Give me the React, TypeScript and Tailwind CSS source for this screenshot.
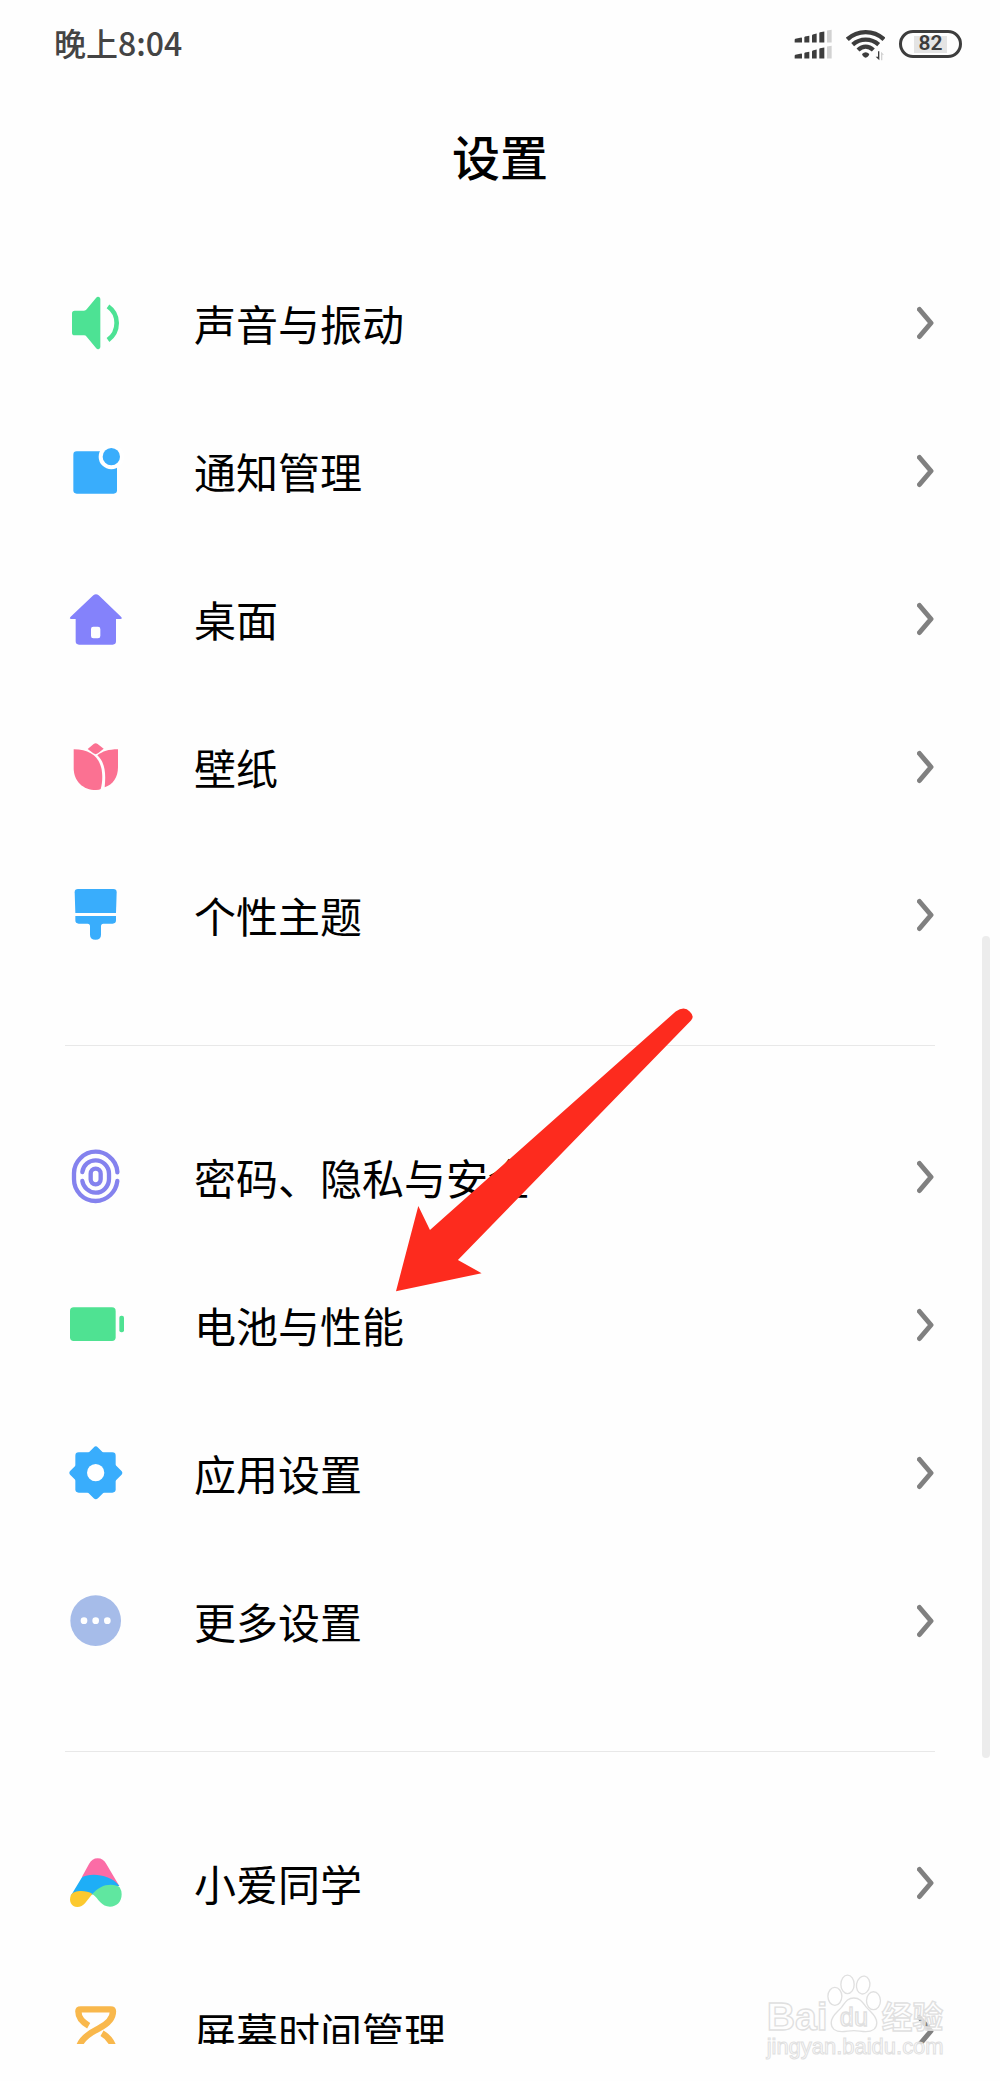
import type { ReactNode } from "react";

type SettingItem = {
  label: string;
  href: string;
  icon: ReactNode;
};

function SoundIcon() {
  return (
    <svg viewBox="75 69 180 180" className="size-[60px]" aria-hidden="true">
      <path
        d="M104 122h28q5 0 8-4l28-34q4-5 9-3q4 1 4 6v144q0 5-4 6q-5 2-9-3l-28-34q-3-4-8-4h-28q-8 0-8-8v-58q0-8 8-8z"
        fill="#4de294"
      />
      <path d="M204 109q26 18 26 50t-26 51" fill="none" stroke="#4de294" strokeWidth="14" />
    </svg>
  );
}

function NotificationIcon() {
  return (
    <svg viewBox="75 513 180 180" className="size-[60px]" aria-hidden="true">
      <rect x="100" y="544" width="131" height="127" rx="10" fill="#39adfc" />
      <circle cx="214" cy="560" r="38" fill="#fff" />
      <circle cx="214" cy="560" r="26" fill="#39adfc" />
    </svg>
  );
}

function HomeIcon() {
  return (
    <svg viewBox="75 58 180 180" className="size-[60px]" aria-hidden="true">
      <path
        fillRule="evenodd"
        d="M160 77q8-7 16 0l67 64q6 6-2 7h-13v67q0 10-10 10h-101q-10 0-10-10v-67h-13q-8-1-2-7zM160 171q-7 0-7 7v21q0 7 7 7h14q7 0 7-7v-21q0-7-7-7z"
        fill="#8482fb"
      />
    </svg>
  );
}

function TulipIcon() {
  return (
    <svg viewBox="75 504 180 180" className="size-[60px]" aria-hidden="true">
      <g fill="#fb7192">
        <path d="M161 525q6-5 12 0l18 14l-17 14q-7 5-14 0l-17-13z" />
        <path d="M101 541c48 0 75 22 83 56c4 18 4 44-2 63q-3 3-14 3c-39 0-67-26-67-67z" />
        <path d="M172 559c16-12 33-18 62-18v54c0 30-15 52-40 60c4-42 2-73-22-96z" />
      </g>
    </svg>
  );
}

function BrushIcon() {
  return (
    <svg viewBox="75 78 180 180" className="size-[60px]" aria-hidden="true">
      <g fill="#39adfc">
        <path d="M114 90h106q10 0 10 10l-2 62h-122l-2-62q0-10 10-10z" />
        <path d="M106 171h122v13q0 10-10 10h-28q-7 0-7 8v25q0 15-16.500 15t-16.500-15v-25q0-8-7-8h-27q-10 0-10-10z" />
      </g>
    </svg>
  );
}

function FingerprintIcon() {
  return (
    <svg viewBox="75 51 180 180" className="size-[60px]" aria-hidden="true">
      <g fill="none" stroke="#8482ee" strokeWidth="13" strokeLinecap="round">
        <path d="M232 127v-2q-2-28-24-45q-18-15-41-15q-27 0-46 20q-19 19-19 45v18q0 27 19 46t46 19q25 0 44-18q18-17 21-42" />
        <path d="M127 126q2-16 14-26q11-9 26-9q17 0 28 12q12 12 12 28v16q0 17-12 29q-11 12-28 12q-15 0-27-11q-11-10-13-24" />
        <rect x="152" y="116" width="30" height="47" rx="15" />
      </g>
    </svg>
  );
}

function BatteryIcon() {
  return (
    <svg viewBox="75 495 180 180" className="size-[60px]" aria-hidden="true">
      <g fill="#4fe292">
        <rect x="90" y="532" width="137" height="101" rx="11" />
        <rect x="238" y="557" width="14" height="50" rx="6" />
      </g>
    </svg>
  );
}

function GearIcon() {
  return (
    <svg viewBox="75 69 180 180" className="size-[60px]" aria-hidden="true">
      <g fill="#39adfc">
        <rect x="106" y="97" width="121" height="121" rx="10" />
        <rect x="109" y="100" width="117" height="117" rx="9" transform="rotate(45 167.500 158.500)" />
      </g>
      <circle cx="167" cy="158" r="26" fill="#fff" />
    </svg>
  );
}

function MoreIcon() {
  return (
    <svg viewBox="75 513 180 180" className="size-[60px]" aria-hidden="true">
      <circle cx="167" cy="602" r="76" fill="#a6bce9" />
      <g fill="#fff">
        <circle cx="132" cy="602" r="10" />
        <circle cx="167" cy="602" r="10" />
        <circle cx="202" cy="602" r="10" />
      </g>
    </svg>
  );
}

function AssistantIcon() {
  return (
    <svg viewBox="75 37 180 180" className="size-[60px]" aria-hidden="true">
      <path d="M126 108l21-38q9-17 26-17t26 17l39 66l-58 4z" fill="#fb6ca6" />
      <path d="M92 166l34-56c24-14 86-10 112 26l-60 12l-22 14l-42 12z" fill="#1eaef7" />
      <path d="M93 163c8-14 44-16 64-3l-22 28q-9 11-23 11c-18 0-27-18-19-36z" fill="#fcc92f" />
      <path
        d="M157 160c16-18 34-28 55-28q18 0 27 8q6 10 6 21c0 24-16 37-35 37c-13 0-21-5-29-13c-8-9-13-17-24-25z"
        fill="#60e7a0"
      />
    </svg>
  );
}

function HourglassIcon() {
  return (
    <svg viewBox="75 482 180 180" className="size-[60px]" aria-hidden="true">
      <g fill="none" stroke="#f9b84c" strokeWidth="19">
        <path
          d="M146 556c-22-12-31-24-31-43q0-6 7-6h90q7 0 7 6c0 22-14 37-42 51c-30 15-52 31-59 53"
          strokeLinejoin="round"
        />
        <path d="M186 579c18 10 27 21 33 38" />
      </g>
    </svg>
  );
}

function Chevron() {
  return (
    <svg viewBox="0 0 18 34" className="h-[34px] w-[18px] shrink-0" aria-hidden="true">
      <path
        d="M2.500 3.500L14 17L2.500 30.500"
        fill="none"
        stroke="#808080"
        strokeWidth="5"
        strokeLinecap="round"
        strokeLinejoin="round"
      />
    </svg>
  );
}

function SignalIcon() {
  return (
    <svg viewBox="104 88 114 92" className="h-[31px] w-[38px]" aria-hidden="true">
      <g fill="#3d3d3d">
        <path d="M108 117l18-4q2 0 2 3v12h-22v-8q0-2 2-3zM137 110l13-2v20h-15v-16zM160 104l12-3v27h-14v-21zM182 97l13-2v33h-15v-29z" />
        <path d="M108 165l18-4q2 0 2 3v12h-22v-8q0-2 2-3zM137 158l13-2v20h-15v-16zM160 152l12-3v27h-14v-21zM182 145l13-2v33h-15v-29z" />
      </g>
      <path d="M203 92l14-2v38h-14zM203 140l14-2v38h-14z" fill="#d2d2d2" />
    </svg>
  );
}

function WifiIcon() {
  return (
    <svg viewBox="261 84 117 99" className="h-[33px] w-[39px]" aria-hidden="true">
      <g fill="none" stroke="#3d3d3d" strokeWidth="13">
        <path d="M265 118c31-29 79-29 110 0" />
        <path d="M281 134c23-20 55-20 78 0" />
        <path d="M297 150c14-13 32-13 46 0" />
      </g>
      <path d="M309 162q11-10 22 0q-3 10-11 11q-8-1-11-11z" fill="#3d3d3d" />
      <path d="M357 154h4v27l-11-11h7z" fill="#3d3d3d" />
      <path d="M366 181v-26l9 9h-5v17z" fill="#d2d2d2" />
    </svg>
  );
}

function Watermark() {
  return (
    <svg
      viewBox="75 395 550 270"
      className="pointer-events-none absolute right-[52px] bottom-[19px] h-[90px] w-[183px]"
      fill="#fff"
      fillOpacity="0.700"
      stroke="#e0e0e0"
      strokeWidth="4"
      fontFamily="'Liberation Sans', 'Noto Sans CJK SC', sans-serif"
    >
      <ellipse cx="285" cy="468" rx="21" ry="27" />
      <ellipse cx="323" cy="432" rx="20" ry="28" />
      <ellipse cx="370" cy="434" rx="20" ry="27" transform="rotate(10 370 434)" />
      <ellipse cx="401" cy="481" rx="21" ry="27" />
      <path d="M342 473c20 0 27 14 38 28c13 15 31 25 31 46c0 19-15 27-33 27c-14 0-22-3-36-3s-22 3-36 3c-18 0-32-9-32-27c0-21 18-31 31-46c11-14 17-28 37-28z" />
      <text x="80" y="570" fontSize="118" fontWeight="700">Bai</text>
      <text x="300" y="556" fontSize="76">du</text>
      <text x="426" y="562" fontSize="92" fontWeight="700">经验</text>
      <text x="80" y="641" fontSize="66" strokeWidth="3">jingyan.baidu.com</text>
    </svg>
  );
}

// long tapered pointer that ends just above the battery row
function Pointer() {
  return (
    <svg
      viewBox="78 84 892 852"
      className="pointer-events-none absolute -top-[95px] left-[331px] h-[284px] w-[297px]"
      aria-hidden="true"
    >
      <path
        d="M78 934L145 678L180 750L918 94Q944 76 960 94Q976 109 964 121L264 840L335 880Z"
        fill="#fd2b1e"
      />
    </svg>
  );
}

const DISPLAY_ITEMS: SettingItem[] = [
  { label: "声音与振动", href: "#sound", icon: <SoundIcon /> },
  { label: "通知管理", href: "#notifications", icon: <NotificationIcon /> },
  { label: "桌面", href: "#home", icon: <HomeIcon /> },
  { label: "壁纸", href: "#wallpaper", icon: <TulipIcon /> },
  { label: "个性主题", href: "#themes", icon: <BrushIcon /> },
];

const SYSTEM_ITEMS: SettingItem[] = [
  { label: "密码、隐私与安全", href: "#security", icon: <FingerprintIcon /> },
  { label: "电池与性能", href: "#battery", icon: <BatteryIcon /> },
  { label: "应用设置", href: "#apps", icon: <GearIcon /> },
  { label: "更多设置", href: "#more", icon: <MoreIcon /> },
];

const SERVICE_ITEMS: SettingItem[] = [
  { label: "小爱同学", href: "#assistant", icon: <AssistantIcon /> },
  { label: "屏幕时间管理", href: "#screen-time", icon: <HourglassIcon /> },
];

function SettingGroup({ items }: { items: SettingItem[] }) {
  return (
    <ul>
      {items.map((item) => (
        <li key={item.href}>
          <a href={item.href} className="flex h-[148px] items-center">
            {item.icon}
            <span className="ml-[69px] flex-1 text-[42px] leading-[60px] text-black">
              {item.label}
            </span>
            <Chevron />
          </a>
        </li>
      ))}
    </ul>
  );
}

export default function App() {
  return (
    <div className="relative flex h-screen flex-col bg-[#fefefe] pb-[37px] font-['Noto_Sans_CJK_SC',sans-serif]">
      <div className="flex h-[88px] shrink-0 items-center justify-between pr-[38px] pl-[54px]">
        <span className="pb-1 text-[32px] font-medium text-[#444]">晚上8:04</span>
        <div className="flex items-center gap-[14px]">
          <SignalIcon />
          <WifiIcon />
          <div className="flex h-7 w-[63px] items-center rounded-full border-[3px] border-[#3d3d3d] px-3">
            <span className="flex h-[17px] flex-1 items-center justify-center bg-[#e4e4e4] font-['Roboto',sans-serif] text-[21px] font-semibold text-[#3d3d3d]">
              82
            </span>
          </div>
        </div>
      </div>

      <header className="shrink-0 pt-[31px] pb-[58px] text-center">
        <h1 className="text-[48px] leading-[72px] font-medium text-black">设置</h1>
      </header>

      <main className="min-h-0 flex-1 overflow-y-auto px-[65px] [scrollbar-width:none]">
        <SettingGroup items={DISPLAY_ITEMS} />
        <hr className="mt-14 mb-[57px] border-[#e8e8e8]" />
        <div className="relative">
          <SettingGroup items={SYSTEM_ITEMS} />
          <Pointer />
        </div>
        <hr className="mt-14 mb-[57px] border-[#e8e8e8]" />
        <SettingGroup items={SERVICE_ITEMS} />
      </main>

      <div className="absolute top-[45%] right-[10px] h-[39.500%] w-2 rounded-full bg-[#ececec]" />
      <Watermark />
    </div>
  );
}
